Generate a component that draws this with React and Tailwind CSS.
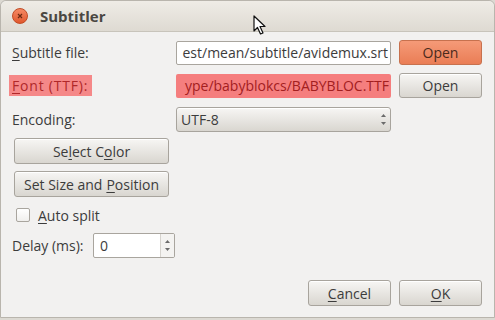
import React from 'react';

const font = { fontFamily: '"Open Sans", "DejaVu Sans", sans-serif' };

const GrayButton = ({ children, className = '' }) => (
  <div
    className={`flex items-center justify-center rounded-[3px] border border-[#a8a49d] bg-gradient-to-b from-[#f7f6f4] to-[#d9d6d0] text-[14px] text-[#3c3c3c] shadow-[inset_0_1px_0_#ffffff] ${className}`}
  >
    {children}
  </div>
);

const Spin = () => (
  <div className="flex flex-col items-center justify-center gap-[5px]">
    <svg width="5" height="3" viewBox="0 0 5 3"><path d="M0 3 L2.5 0 L5 3 Z" fill="#6b6b6b" /></svg>
    <svg width="5" height="3" viewBox="0 0 5 3"><path d="M0 0 L2.5 3 L5 0 Z" fill="#6b6b6b" /></svg>
  </div>
);

export default function App() {
  return (
    <div className="w-[495px] h-[320px] bg-[#dcd9d2] overflow-hidden" style={font}>
      <div className="relative w-[495px] h-[318px] rounded-t-[6px] border border-[#b9b5ad] bg-[#f2f1f0] flex flex-col">
        {/* Title bar */}
        <div className="h-[31px] flex items-center rounded-t-[6px] bg-gradient-to-b from-[#efece6] to-[#dedad2] border-b border-[#c8c4bb]">
          <div className="ml-[11px] w-[16px] h-[16px] rounded-full bg-gradient-to-b from-[#f58a64] to-[#e0572c] border border-[#c24b24] flex items-center justify-center">
            <svg width="6" height="6" viewBox="0 0 6 6"><path d="M1 1 L5 5 M5 1 L1 5" stroke="#6b2a12" strokeWidth="1.2" /></svg>
          </div>
          <span className="ml-[12px] text-[15px] font-bold text-[#4a4742]">Subtitler</span>
        </div>

        {/* cursor */}
        <svg className="absolute left-[252px] top-[14px]" width="14" height="21" viewBox="0 0 14 21">
          <path d="M1 1 L1 16 L4.5 12.5 L7.5 19 L10 18 L7 11.5 L12 11.5 Z" fill="#ffffff" stroke="#111111" strokeWidth="1.2" strokeLinejoin="round" />
        </svg>

        <div className="flex flex-col pl-[11px] pr-[12px] text-[14px] text-[#3c3c3c]">
          {/* Row 1 */}
          <div className="mt-[8px] flex items-center h-[25px]">
            <span className="w-[164px]"><span className="underline underline-offset-2">S</span>ubtitle file:</span>
            <div className="w-[215px] h-[24px] border border-[#a9a59e] rounded-[2px] bg-white flex items-center justify-end pr-[2px] overflow-hidden whitespace-nowrap text-[#3c3c3c]">
              est/mean/subtitle/avidemux.srt
            </div>
            <div className="ml-[8px] w-[83px] h-[25px] rounded-[3px] border border-[#c7714e] bg-gradient-to-b from-[#f59a78] to-[#ea7d55] flex items-center justify-center text-[#4a2a1c]">
              Open
            </div>
          </div>

          {/* Row 2 */}
          <div className="mt-[8px] flex items-center h-[25px]">
            <span className="w-[164px]">
              <span className="-ml-[3px] pl-[3px] pr-[4px] py-[1px] tracking-[0.8px] bg-[#f58888] text-[#b0282a]"><span className="underline underline-offset-2">F</span>ont (TTF):</span>
            </span>
            <div className="w-[215px] h-[24px] rounded-[2px] bg-[#f57e7e] flex items-center justify-end pr-[2px] overflow-hidden whitespace-nowrap text-[#a3201f]">
              ype/babyblokcs/BABYBLOC.TTF
            </div>
            <GrayButton className="ml-[8px] w-[83px] h-[25px]">Open</GrayButton>
          </div>

          {/* Row 3 */}
          <div className="mt-[9px] flex items-center h-[25px]">
            <span className="w-[164px]">Encoding:</span>
            <GrayButton className="w-[215px] h-[25px] !justify-between px-[4px]">
              <span>UTF-8</span>
              <Spin />
            </GrayButton>
          </div>

          <GrayButton className="mt-[6px] ml-[2px] w-[155px] h-[26px]">
            Se<span className="underline underline-offset-2">l</span>ect C<span className="underline underline-offset-2">o</span>lor
          </GrayButton>
          <GrayButton className="mt-[7px] ml-[2px] w-[155px] h-[26px]">
            Set Size and <span className="underline underline-offset-2 ml-[4px]">P</span>osition
          </GrayButton>

          <div className="mt-[9px] flex items-center h-[18px]">
            <div className="ml-[4px] w-[14px] h-[14px] rounded-[2px] border border-[#a9a59e] bg-gradient-to-b from-white to-[#f0efed]" />
            <span className="ml-[8px]"><span className="underline underline-offset-2">A</span>uto split</span>
          </div>

          <div className="mt-[9px] flex items-center h-[25px]">
            <span className="w-[81px]">Delay (ms):</span>
            <div className="w-[82px] h-[25px] border border-[#a9a59e] rounded-[2px] bg-white flex overflow-hidden">
              <span className="flex-1 pl-[6px] flex items-center">0</span>
              <div className="w-[14px] border-l border-[#d6d3ce] bg-[#f4f3f1] flex items-center justify-center">
                <Spin />
              </div>
            </div>
          </div>

          <div className="mt-[22px] flex justify-end gap-[8px]">
            <GrayButton className="w-[83px] h-[26px]">
              <span className="underline underline-offset-2">C</span>ancel
            </GrayButton>
            <GrayButton className="w-[83px] h-[26px]">
              <span className="underline underline-offset-2">O</span>K
            </GrayButton>
          </div>
        </div>
      </div>
    </div>
  );
}
